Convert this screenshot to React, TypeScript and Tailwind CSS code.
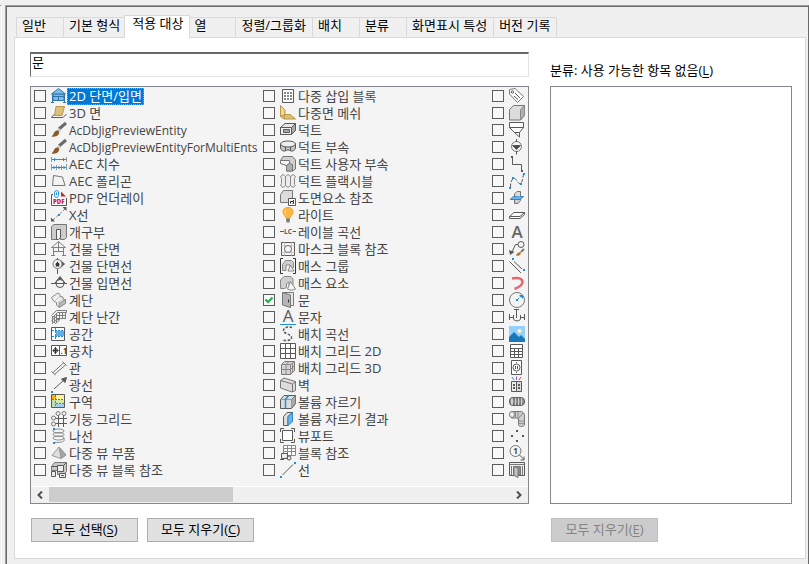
import { useState } from "react";
import type { ReactNode } from "react";
import clsx from "clsx";

const BLUE = "#1e8fdc";
const LIGHT = "#dcdcdc";

const tabs = ["일반", "기본 형식", "적용 대상", "열", "정렬/그룹화", "배치", "분류", "화면표시 특성", "버전 기록"];

type Item = { label: string; icon: ReactNode; hideLabel?: boolean };

const brush = (
  <>
    <path d="M15 1 8 7" stroke="#6b6b6b" strokeWidth="3" />
    <path d="M9 7 7 9" stroke="#c9c9c9" strokeWidth="3" />
    <path d="M.5 14.5C3 13 2.500 9.500 5.500 8.500 8 8 9 10.500 7.500 12.500 6 14.500 3 15 .5 14.500z" fill="#8a5a2b" stroke="none" />
  </>
);

const columns: Item[][] = [
  [
    {
      label: "2D 단면/입면",
      icon: (
        <g stroke="#2f75a8" fill="#7dbdeb">
          <path d="M2 6h11v6.500H2z" />
          <path d="M7.500 .5 14.500 6H.5z" />
          <path d="M7.500 8v4M2 8.500h11M1.500 6.500v8M13.500 6.500v8M0 14.500h3M12 14.500h3" />
        </g>
      ),
    },
    {
      label: "3D 면",
      icon: (
        <>
          <path d="M5 1.500h8.500L11 10.500H3.500z" fill="#dcc077" stroke="#b8964a" />
          <path d="M3 9.500.5 12.500h11.500l3.500-3.500" />
        </>
      ),
    },
    { label: "AcDbJigPreviewEntity", icon: brush },
    { label: "AcDbJigPreviewEntityForMultiEnts", icon: brush },
    {
      label: "AEC 치수",
      icon: (
        <>
          <path d="M.5 1v5M15.500 1v5M.5 8v6M15.500 8v6M5.500 9v5M10.500 9v5" stroke="#999" />
          <path d="M1 3.500h14M1 11.500h14M3.500 2v3M12.500 2v3M3 10v3M8 10v3M13 10v3" stroke={BLUE} />
        </>
      ),
    },
    { label: "AEC 폴리곤", icon: <path d="M2.500 2.500 11.500 4 14 12.500H1.500z" stroke="#777" /> },
    {
      label: "PDF 언더레이",
      icon: (
        <>
          <path d="M2 4.500H.5v11h15V8M12 4.500h-2" />
          <path d="M1.500 8h12.500v6.500H1.500z" fill="#fff" stroke="none" />
          <path d="M7.500 5.500V1.500C7 .3 3.500 .3 3.500 2.500v3c0 2.300 3.500 2.300 4 .7M5.500 2.500v2.500" stroke={BLUE} />
          <path d="M10 1.500 15 6.500H10z" fill="#d5212a" stroke="none" />
          <text x="2" y="13.500" fontSize="6" fontWeight="800" fill="#d5212a" stroke="none">PDF</text>
        </>
      ),
    },
    {
      label: "X선",
      icon: (
        <>
          <path d="M2 13 14 2" strokeDasharray="3 1.500" stroke="#888" />
          <path d="M0 14.500v-4l4 4zM15.500 0v4l-4-4z" fill="#595959" stroke="none" />
          <path d="M7 7h2v2H7z" fill={BLUE} stroke="none" />
        </>
      ),
    },
    {
      label: "개구부",
      icon: (
        <>
          <path d="M.5 2.500 3 .5h12.500v13l-2 2h-4v-10h-4v10h-5z" fill="#cdcdcd" stroke="#777" />
          <path d="M5.500 15.500v-10h4v8L7.500 15.500z" fill="#f4f4f4" />
        </>
      ),
    },
    {
      label: "건물 단면",
      icon: (
        <path d="M7.500 .5 14.500 6.500H.5zM2.500 6.500v8M12.500 6.500v8M7.500 1v9M2.500 10.500h10M0 14.500h4M11 14.500h4" stroke="#808080" />
      ),
    },
    {
      label: "건물 단면선",
      icon: (
        <>
          <path d="M9 2 13.500 6 9 10z" fill="#595959" />
          <circle cx="6.500" cy="6" r="4.500" fill="#f4f4f4" stroke="#777" />
          <path d="M6.500 0v2M6.500 11v5" />
          <path d="m6.500 3.500 2 2.500-.5 2.500H5L4.500 6z" fill="#333" stroke="none" />
        </>
      ),
    },
    {
      label: "건물 입면선",
      icon: (
        <>
          <path d="M9 1.500 14 8H4z" fill="#595959" />
          <circle cx="9" cy="8.500" r="4" fill="#f4f4f4" />
          <path d="M0 8.500h16" />
        </>
      ),
    },
    {
      label: "계단",
      icon: (
        <>
          <path d="M.5 5.500 7 1l2 1.500v2l3 .5v2l2.500 1v3L8 15.500 5.500 13v-2.500L2.500 9z" fill="#f0f0f0" stroke="#888" />
          <path d="m9 4.500-5 4M12 6.500 6.500 11" stroke="#c4c4c4" />
          <path d="m8 11.500 6.500-4v4L8 15.500z" fill="#bdbdbd" stroke="#888" />
        </>
      ),
    },
    {
      label: "계단 난간",
      icon: (
        <path d="M.5 6.500 5.500 1.500h10v2h-9l-5 5M1.500 7v7.500M3.500 6v8M5.500 4v9.500M8.500 3v7.500M11.500 3v7M14.500 3v7M6 6.500h9M6 9.500h9M1 14.500l5-4h3l-5 4.500M.5 11.500l5-4" stroke="#7d7d7d" />
      ),
    },
    {
      label: "공간",
      icon: (
        <>
          <path d="M.5 1.500h13v13H.5z" fill="#fff" />
          <path d="M5 5h8v5H5z" fill="#62aeea" stroke="none" />
          <path d="M4.500 2v12M1 4.500h12M1 10.500h12" stroke={BLUE} strokeDasharray="2 1" />
        </>
      ),
    },
    {
      label: "공차",
      icon: (
        <>
          <path d="M.5 2.500h8v10h-8zM8.500 2.500h7v10h-7z" fill="#fff" />
          <circle cx="4.500" cy="7.500" r="2" stroke="#333" />
          <path d="M1.500 7.500h6M4.500 4v7" stroke="#333" />
          <text x="9.500" y="11" fontSize="8" fontWeight="600" fill="#222" stroke="none">.1</text>
        </>
      ),
    },
    {
      label: "관",
      icon: <path d="M2 12.500 13 2.500M4 14 15 4.500M.5 11.500l4 3.500M11.500 1.500l4 4" stroke="#777" />,
    },
    {
      label: "광선",
      icon: (
        <>
          <path d="M3 12 13 3" />
          <path d="M15.500 .5 14 5.500 10.500 2z" fill="#595959" />
          <path d="M0 14h2v2H0z" fill={BLUE} stroke="none" />
        </>
      ),
    },
    {
      label: "구역",
      icon: (
        <>
          <path d="M1 1h13v13H1z" fill="#fff49b" stroke="none" />
          <path d="M1 6h4v8H1z" fill="#b9dfb8" stroke="none" />
          <path d="M5 10h9v4H5z" fill="#a9cdf2" stroke="none" />
          <path d="M5 6h9v4H5z" fill="#d4e9a8" stroke="none" />
          <path d="M1 1h4v4H1z" fill="#ffb400" stroke="none" />
          <path d="M4.500 1v13M1 5.500h13M5 9.500h9" stroke={BLUE} strokeDasharray="2 1" />
          <path d="M.5 .5h13v13H.5z" />
        </>
      ),
    },
    {
      label: "기둥 그리드",
      icon: (
        <>
          <g stroke="#777">
            <circle cx="7" cy="2.500" r="2" /><circle cx="13" cy="2.500" r="2" />
            <circle cx="2.500" cy="7" r="2" /><circle cx="2.500" cy="13" r="2" />
          </g>
          <path d="M7.500 4.500V16M12.500 4.500V16M4.500 7.500H16M4.500 12.500H16" />
        </>
      ),
    },
    {
      label: "나선",
      icon: (
        <>
          <g stroke="#888">
            <ellipse cx="7.500" cy="3" rx="5.500" ry="2" /><ellipse cx="7.500" cy="6.500" rx="5.500" ry="2" />
            <ellipse cx="7.500" cy="10" rx="5.500" ry="2" /><path d="M13 10v2.500c-1 2-5 2-9 2" />
          </g>
          <path d="M2 0h2v2H2zM2 14h2v2H2z" fill={BLUE} stroke="none" />
        </>
      ),
    },
    {
      label: "다중 뷰 부품",
      icon: (
        <>
          <path d="M8 2 15 10l-5 3.500L1 10.500z" fill="#dedede" stroke="#999" />
          <path d="M8 2 15 10l-5 3.500z" fill="#a5a5a5" stroke="#999" />
        </>
      ),
    },
    {
      label: "다중 뷰 블록 참조",
      icon: (
        <>
          <path d="M.5 4.500 3.500 .5h12v9l-3 3h-6v-4h-6z" fill="#c9c9c9" stroke="#777" />
          <path d="M6.500 3.500h6v6h-6zM12.500 3.500l3-3M.5 4.500h6M.5 9.500h4v5h-4zM8.500 11.500h6v4h-6z" fill="#eee" />
          <path d="M10 13.500h3" />
        </>
      ),
    },
  ],
  [
    {
      label: "다중 삽입 블록",
      icon: (
        <>
          <path d="M2.500 1.500h11v13h-11z" fill="#fff" />
          <path d="M4 5h8M4 8h8M4 11h8" stroke="#8a8a8a" strokeWidth="2" strokeDasharray="2 1" />
        </>
      ),
    },
    {
      label: "다중면 메쉬",
      icon: (
        <>
          <path d="M.5 .5 5 5v5L.5 11.500z" fill="#efd989" stroke="#b8964a" />
          <path d="M.5 11.500 5 9.500h5l5.500 4.500H4z" fill="#dcc077" stroke="#b8964a" />
          <path d="M5 9.500 4 13.500" stroke="#b8964a" />
        </>
      ),
    },
    {
      label: "덕트",
      icon: (
        <>
          <path d="M.5 5.500 5 1.500h10.500v7l-4 4H.5z" fill="#e6e6e6" />
          <path d="M.5 5.500h11v7H.5z" fill="#f2f2f2" />
          <path d="M11.500 5.500l4-4v7l-4 4z" fill="#aaa" />
          <path d="M3.500 7.500h6v3h-6z" fill="#aaa" />
        </>
      ),
    },
    {
      label: "덕트 부속",
      icon: (
        <>
          <path d="M.5 5v4.500c1 2 3 3 5 2.500l1-1h3l1 1c2 .5 4-.5 5-2.500V5z" fill="#c4c4c4" />
          <ellipse cx="8" cy="5" rx="7.500" ry="3" fill="#efefef" />
          <path d="M5.500 8v4M10.500 8v4" />
        </>
      ),
    },
    {
      label: "덕트 사용자 부속",
      icon: (
        <>
          <path d="M.5 4.500 3 .5h9.500l3 3.500v9l-3 2h-6V9.500L.5 7z" fill="#d0d0d0" stroke="#777" />
          <path d="M.5 4.500h9v3l-3 2L.5 7.500z" fill="#f4f4f4" stroke="#777" />
          <path d="M6.500 9.500 9.500 7.500l3 1v6.500h-6z" fill="#b0b0b0" stroke="#777" />
        </>
      ),
    },
    {
      label: "덕트 플랙시블",
      icon: (
        <path d="M.5 3.500 3 1.500l2.500 2L8 1.500l2.500 2 2.500-2 2.500 2-1 2v6l1 1-2.500 2-2.500-2-2.500 2-2.500-2-2.500 2L.5 12.500l1-2v-5zM5.500 3.500v9M10.500 3.500v9" fill="#ececec" stroke="#888" />
      ),
    },
    {
      label: "도면요소 참조",
      icon: (
        <>
          <path d="M.5 4.500 3.500 .5h9v12h-12z" fill="#dcdcdc" stroke="#777" />
          <path d="M8.500 8.500h7v7h-7z" fill="#fff" />
          <path d="M10.500 13.500v-2h3v2h-1M13.500 11V10" stroke="#222" />
        </>
      ),
    },
    {
      label: "라이트",
      icon: (
        <>
          <path d="M8 .5c6 0 6 5 3.500 8L10 11H6L4.500 8.500C2 5.500 2 .5 8 .5z" fill="#ffb845" stroke="#f5a52e" />
          <path d="M6 3c-1 1-1 2-.5 3.500" stroke="#fff2c4" />
          <path d="M6 12.500h4M6.500 14.500h3" strokeWidth="2" stroke="#777" />
        </>
      ),
    },
    {
      label: "레이블 곡선",
      icon: (
        <>
          <path d="M0 7.500h4M12.500 7.500H16" />
          <text x="4" y="10" fontSize="6.500" fontWeight="700" fill="#595959" stroke="none">LC</text>
        </>
      ),
    },
    {
      label: "마스크 블록 참조",
      icon: (
        <>
          <path d="M1.500 1.500h13v13h-13z" />
          <path d="M1.500 4.500h13M1.500 11.500h13M4.500 1.500v13M11.500 1.500v13" stroke="#c5c5c5" />
          <circle cx="8" cy="8" r="3.500" fill="#f4f4f4" stroke="#777" />
        </>
      ),
    },
    {
      label: "매스 그룹",
      icon: (
        <>
          <path d="M3 .5H.5v15H3M13 .5h2.500v15H13" stroke="#333" />
          <path d="M2.500 12.500v-6l3-4h6l2 2v5L10 10V7H6v5.500z" fill="#cfcfcf" stroke="#888" />
          <path d="M10.500 7 14 13H8z" fill="#ececec" stroke="#888" />
        </>
      ),
    },
    {
      label: "매스 요소",
      icon: (
        <>
          <path d="M.5 13.500V5L4 1.500h7l2 2.500v6H9V7L6.500 8.500v4l-2 1z" fill="#cfcfcf" stroke="#888" />
          <path d="M10.500 6.500 15.500 14c-2 1.500-6 1.500-8 0z" fill="#f2f2f2" stroke="#888" />
        </>
      ),
    },
    {
      label: "문",
      icon: (
        <>
          <path d="M2.500 .5h11v13h-5" fill="#e8e8e8" stroke="#777" />
          <path d="M2.500 .5 10.500 3v12.500l-8-2.500z" fill="#b5b5b5" stroke="#777" />
          <path d="M8.500 7.500v3" stroke="#333" />
        </>
      ),
    },
    {
      label: "문자",
      icon: (
        <>
          <text x="8" y="13" fontSize="17" textAnchor="middle" fill="#595959" stroke="none">A</text>
          <path d="M0 15.500h16" stroke={BLUE} />
        </>
      ),
    },
    {
      label: "배치 곡선",
      icon: (
        <path d="M12 1.500C8 0 3 2 3.500 5s8.500 3 8 7c0 2.500-6 3-9 2" strokeWidth="1.500" strokeDasharray="2.500 1.500" />
      ),
    },
    { label: "배치 그리드 2D", icon: <path d="M.5 .5h15v15H.5zM5.500 .5v15M10.500 .5v15M.5 5.500h15M.5 10.500h15" fill="#fff" /> },
    {
      label: "배치 그리드 3D",
      icon: (
        <>
          <path d="M1.500 4.500 4.500 1.500h10v9l-4 4h-9z" fill="#d4d4d4" stroke="#777" />
          <path d="M1.500 4.500h9v10M10.500 4.500l4-3M6 4.500v10M1.500 9.500h9l4-4M12.500 3v10M6 4.500 9 1.500" stroke="#888" />
        </>
      ),
    },
    {
      label: "벽",
      icon: (
        <>
          <path d="M.5 3.500 4 1 15.500 4.500v9L12 15 .5 11z" fill="#dcdcdc" stroke="#777" />
          <path d="M.5 3.500 12.500 7l3-2.500M12.500 7v8" stroke="#777" />
        </>
      ),
    },
    {
      label: "볼륨 자르기",
      icon: (
        <>
          <path d="M.5 5.500 4 1.500h11.500v8l-4 5H.5z" fill={LIGHT} />
          <path d="M11.500 5.500l4-4v8l-4 5z" fill="#aaa" stroke="#777" />
          <path d="M.5 5.500h11v9" stroke="#999" />
          <path d="M5.500 14.500v-9l3-4" stroke={BLUE} strokeWidth="1.500" />
        </>
      ),
    },
    {
      label: "볼륨 자르기 결과",
      icon: (
        <>
          <path d="M3.500 5.500 7 1.500h5.500L8 5.500v9H3.500z" fill="#dedede" />
          <path d="M8 5.500l4.500-4v9L8 14.500z" fill="#6db4ea" stroke="#2f86c5" />
        </>
      ),
    },
    {
      label: "뷰포트",
      icon: (
        <>
          <path d="M2.500 2.500h10v10h-10z" fill="#fff" />
          <path d="M4 .5H.5V4M11 .5h3.500V4M.5 11v3.500H4M14.500 11v3.500H11" />
        </>
      ),
    },
    {
      label: "블록 참조",
      icon: (
        <>
          <path d="M3.500 .5h12v10h-12zM3.500 3.500h12M3.500 6.500h12M7.500 .5v10M11.500 .5v10" fill="#fff" stroke="#888" />
          <path d="M1.500 8.500h6v5h-6z" fill="#eee" />
          <circle cx="9" cy="13" r="2" />
          <path d="M0 14.500h4" />
        </>
      ),
    },
    {
      label: "선",
      icon: (
        <>
          <path d="M2.500 13 13 2.500" />
          <path d="M0 14h2v2H0zM14 0h2v2h-2z" fill={BLUE} stroke="none" />
        </>
      ),
    },
  ],
  [
    {
      label: "태그",
      hideLabel: true,
      icon: (
        <>
          <path d="M.5 1.500 6 .5l8.500 8-6 6L.5 6z" fill="#fff" stroke="#777" />
          <circle cx="3.500" cy="4" r="1.200" />
          <path d="M6 5l5 5M5 8l4 3.500" />
        </>
      ),
    },
    {
      label: "솔리드",
      hideLabel: true,
      icon: (
        <>
          <path d="M.5 4.500 4.500 .5h11v10l-4 4.500H.5z" fill="#dcdcdc" stroke="#777" />
          <path d="M11.500 4.500l4-4v10l-4 4.500z" fill="#b0b0b0" stroke="#888" />
        </>
      ),
    },
    { label: "스케줄 태그", hideLabel: true, icon: <path d="M.5 .5h14v5H.5zM.5 5.500 5.500 10.500h5L14.500 5.500M5.500 10.500l5 4.500v-4.500" fill="#fff" /> },
    {
      label: "입면 표식",
      hideLabel: true,
      icon: (
        <>
          <circle cx="7.500" cy="7.500" r="5" stroke="#777" />
          <path d="M3.500 6.500h8l-4 4z" fill="#4a4a4a" />
          <path d="M7.500 0v3M7.500 12v3.500" />
        </>
      ),
    },
    {
      label: "배관",
      hideLabel: true,
      icon: (
        <>
          <path d="M3.500 2v6.500h9V14" />
          <path d="M2 0h2v2H2zM12 14h2v2h-2z" fill="#595959" stroke="none" />
        </>
      ),
    },
    {
      label: "스플라인",
      hideLabel: true,
      icon: (
        <>
          <path d="M1.500 14c0-5 1.500-9 4-8.500s4 6.500 6 5S14 4 14.500 1" strokeDasharray="3.500 1.500" />
          <path d="M0 14h2v2H0zM3 4h2v2H3zM11 10h2v2h-2zM14 0h2v2h-2z" fill={BLUE} stroke="none" />
        </>
      ),
    },
    {
      label: "단면 평면",
      hideLabel: true,
      icon: (
        <>
          <path d="M5.500 4 8 1.500h3.500v9L9 13.500H5.500z" fill="#cfcfcf" stroke="#777" />
          <path d="M1 9.500 4.500 6.500h10L11 9.500z" fill="#6db4ea" stroke="#2f86c5" />
          <path d="M6 6V4.500L8.500 2H11v4.500z" fill="#dcdcdc" stroke="none" />
        </>
      ),
    },
    {
      label: "슬라브",
      hideLabel: true,
      icon: <path d="M.5 9.500 5 5.500h10.500v2l-4.500 4H.5zM.5 9.500H11l4.500-4" fill="#fff" />,
    },
    {
      label: "여러 줄 문자",
      hideLabel: true,
      icon: <text x="8" y="14" fontSize="17" fontWeight="600" textAnchor="middle" fill="#666" stroke="none">A</text>,
    },
    {
      label: "스타일 표식",
      hideLabel: true,
      icon: (
        <>
          <circle cx="12" cy="3.500" r="3" />
          <path d="M9 3.500H6.500L3 11" />
          <path d="M0 9l5.500 2L1 14z" fill="#595959" stroke="none" />
          <path d="M15 8l-3 3" stroke="#777" strokeWidth="2" />
          <path d="M7 14.500c1-3 3-4 5-3 0 2-2 4-5 3z" fill="#b5762a" stroke="none" />
        </>
      ),
    },
    {
      label: "여러 줄",
      hideLabel: true,
      icon: (
        <>
          <path d="M.5 3.500 12 15M5 3.500 13 11" />
          <path d="M3 0h2v2H3zM14 11h2v2h-2z" fill={BLUE} stroke="none" />
        </>
      ),
    },
    {
      label: "스윕",
      hideLabel: true,
      icon: <path d="M3 3.500c6-1.500 10.500 0 10.500 3.500 0 3-3 5-8 7" stroke="#e8656a" strokeWidth="2.500" />,
    },
    {
      label: "원",
      hideLabel: true,
      icon: (
        <>
          <circle cx="8" cy="8" r="7.500" stroke="#777" />
          <path d="M9 7l4-4" stroke={BLUE} strokeDasharray="1.500 1" />
          <path d="M7 7h2v2H7zM10 3h4v4z" fill={BLUE} stroke="none" />
        </>
      ),
    },
    {
      label: "위생 기구",
      hideLabel: true,
      icon: <path d="M.5 5v6M15.500 5v6M.5 8.500h4M11.500 8.500h4M4.500 6v4c1 2.500 6 2.500 7 0V6M7.500 1v8M5 .5h5" />,
    },
    {
      label: "이미지",
      hideLabel: true,
      icon: (
        <>
          <path d="M0 0h16v16H0z" fill="#94d0fa" stroke="none" />
          <circle cx="10.500" cy="5" r="2" fill="#fff7c7" stroke="none" />
          <path d="M0 11 5 6l5 5 2-2 4 4v3H0z" fill="#1878b9" stroke="none" />
        </>
      ),
    },
    { label: "일람표", hideLabel: true, icon: <path d="M1.500 1.500h12v13h-12zM1.500 5.500h12M1.500 8.500h12M1.500 11.500h12M5.500 5.500v9M9.500 5.500v9" fill="#fff" /> },
    {
      label: "장치",
      hideLabel: true,
      icon: (
        <>
          <path d="M2.500 .5h10v14h-10z" fill="#fff" />
          <circle cx="7.500" cy="7.500" r="3.500" />
          <path d="M6.500 6v3M8.500 6v3M7.500 2v1M7.500 12v1" />
        </>
      ),
    },
    {
      label: "패널",
      hideLabel: true,
      icon: (
        <>
          <path d="M3 0l2 3" stroke={BLUE} />
          <path d="M7.500 -.5v3.500" stroke="#9c4fd0" />
          <path d="M12 0l-2 3" stroke="#e34444" />
          <path d="M2.500 4.500h5v10h-5z" fill="#eee" />
          <path d="M7.500 4.500h5v10h-5z" fill="#dcdcdc" />
          <path d="M4 8h2M4 11h2M9 8h2M9 11h2" strokeWidth="2" />
        </>
      ),
    },
    {
      label: "전선관",
      hideLabel: true,
      icon: (
        <>
          <rect x=".5" y="3.500" width="15" height="8" rx="3.500" fill="#aaa" />
          <g stroke="#666" fill="#d0d0d0">
            <ellipse cx="12.500" cy="7.500" rx="1.500" ry="4" /><ellipse cx="9.500" cy="7.500" rx="1.500" ry="4" />
            <ellipse cx="6.500" cy="7.500" rx="1.500" ry="4" /><ellipse cx="3" cy="7.500" rx="2" ry="4" />
          </g>
        </>
      ),
    },
    {
      label: "전선관 부속",
      hideLabel: true,
      icon: (
        <>
          <path d="M2.500 .5H11c3 0 4.500 2 4.500 4.500v9c-1.500 2-5 2-6 0V8l-2-1h-5z" fill="#d0d0d0" stroke="#777" />
          <ellipse cx="3" cy="3.500" rx="2.500" ry="3" fill="#eee" stroke="#777" />
          <path d="M6.500 .5v6M9 1v6.500M14 2 9.500 7.500M9.500 9.500c2 1 4 1 6 0M9.500 12c2 1 4 1 6 0" stroke="#888" />
        </>
      ),
    },
    {
      label: "점",
      hideLabel: true,
      icon: <path d="M7 2h2v2H7zM2 7h2v2H2zM13 7h2v2h-2zM7 12h2v2H7z" fill="#595959" stroke="none" />,
    },
    {
      label: "상세정보 표식",
      hideLabel: true,
      icon: (
        <>
          <circle cx="6.500" cy="6" r="5.500" stroke="#777" />
          <path d="M10.500 10l4.500 4.500M15 11.500v3.500h-3.500" />
          <text x="6.500" y="9" fontSize="8" fontWeight="700" textAnchor="middle" fill="#444" stroke="none">1</text>
        </>
      ),
    },
    {
      label: "문/윈도우 조합",
      hideLabel: true,
      icon: (
        <>
          <path d="M.5 .5h15v13H.5z" fill="#efefef" />
          <path d="M.5 2.500h15M2.500 4v9M13.500 4v9" stroke="#777" />
          <path d="M4.500 4.500h7V13h-7z" fill="#8a8a8a" stroke="#777" />
          <path d="M5 4.500 9 6v9.500l-4-2z" fill="#c4c4c4" stroke="#777" />
        </>
      ),
    },
  ],
];

function ItemIcon({ children }: { children: ReactNode }) {
  return (
    <svg
      className="ml-[5px] size-4 shrink-0 overflow-visible"
      viewBox="0 0 16 16"
      fill="none"
      stroke="#595959"
      aria-hidden="true"
    >
      {children}
    </svg>
  );
}

type ItemRowProps = { item: Item; checked: boolean; selected: boolean; onToggle: () => void };

function ItemRow({ item, checked, selected, onToggle }: ItemRowProps) {
  // Class names of drawing entities have no Korean text and are set smaller
  const latinOnly = /^[A-Za-z]+$/.test(item.label);

  return (
    <li>
      <label className="flex h-[17px] items-start text-[#444444]">
        <span className="relative mt-0.5 size-3 shrink-0">
          <input
            type="checkbox"
            checked={checked}
            onChange={onToggle}
            aria-label={item.hideLabel ? item.label : undefined}
            className="block size-3 appearance-none border border-[#5c5c5c] bg-[#f8f8f8]"
          />
          {checked && (
            <svg className="pointer-events-none absolute inset-0" viewBox="0 0 12 12" fill="none" aria-hidden="true">
              <path d="M2.500 5.500 5 8l4.500-4.500" stroke="#1faa4b" strokeWidth="2" />
            </svg>
          )}
        </span>
        <ItemIcon>{item.icon}</ItemIcon>
        {!item.hideLabel && (
          <span
            className={clsx(
              "h-[17px] px-0.5 whitespace-nowrap",
              latinOnly && "text-xs/[17px]",
              selected && "bg-[#0078d7] text-white outline-1 -outline-offset-1 outline-dotted outline-[#ff8728]",
            )}
          >
            {item.label}
          </span>
        )}
      </label>
    </li>
  );
}

type ActionButtonProps = { label: string; hotkey: string; disabled?: boolean; onClick?: () => void };

function ActionButton({ label, hotkey, disabled, onClick }: ActionButtonProps) {
  return (
    <button
      type="button"
      disabled={disabled}
      onClick={onClick}
      className="h-6 w-[107px] border border-[#adadad] bg-[#e1e1e1] pb-0.5 disabled:border-[#bfbfbf] disabled:bg-[#cccccc] disabled:text-[#838383]"
    >
      {label}(<span className="underline underline-offset-2">{hotkey}</span>)
    </button>
  );
}

function ScrollArrow({ direction }: { direction: "left" | "right" }) {
  return (
    <button
      type="button"
      aria-label={direction === "left" ? "왼쪽" : "오른쪽"}
      className="flex w-[18px] shrink-0 items-center justify-center"
    >
      <svg className="size-2" viewBox="0 0 8 8" fill="none" stroke="#505050" strokeWidth="2" aria-hidden="true">
        <path d={direction === "left" ? "M6 .5 2.500 4 6 7.500" : "M2 .5 5.500 4 2 7.500"} />
      </svg>
    </button>
  );
}

export default function App() {
  const [activeTab, setActiveTab] = useState("적용 대상");
  const [filter, setFilter] = useState("문");
  const [checked, setChecked] = useState<string[]>(["문"]);

  const toggle = (label: string) =>
    setChecked((prev) => (prev.includes(label) ? prev.filter((l) => l !== label) : [...prev, label]));

  return (
    <div className="flex min-h-screen bg-[#f0f0f0] pt-[5px] font-['Open_Sans','Noto_Sans_CJK_KR',sans-serif] text-[13px] leading-[17px] text-black">
      <div className="mr-[3px] w-0.5 border-t border-r border-t-[#a0a0a0] border-r-white" />
      <main className="min-w-0 flex-1 border-t border-r border-l border-t-[#a0a0a0] border-r-[#696969] border-l-[#a0a0a0]">
        <div className="h-full border-t border-l border-[#696969] pt-2 pr-0.5 pl-[7px]">
          <div role="tablist" className="flex items-end pt-0.5 pl-0.5">
            {tabs.map((tab) => (
              <button
                key={tab}
                type="button"
                role="tab"
                aria-selected={tab === activeTab}
                onClick={() => setActiveTab(tab)}
                className={clsx(
                  "shrink-0 border-t border-l border-[#d9d9d9] text-left leading-3 whitespace-nowrap last:border-r",
                  tab === activeTab
                    ? "relative z-10 -mx-0.5 -mt-0.5 -mb-px h-[23px] border-r bg-white pr-1.5 pb-2 pl-[7px]"
                    : "h-5 min-w-[47px] pr-1.5 pb-1.5 pl-[5px]",
                )}
              >
                {tab}
              </button>
            ))}
          </div>

          <section role="tabpanel" className="flex gap-[21px] border border-[#d9d9d9] bg-white pt-3.5 pr-[13px] pb-4 pl-[15px]">
            <div className="flex min-w-0 flex-1 flex-col">
              <input
                type="text"
                aria-label="필터"
                value={filter}
                onChange={(e) => setFilter(e.target.value)}
                className="h-[25px] w-full border border-t-2 border-t-[#696969] border-r-[#e3e3e3] border-b-[#e3e3e3] border-l-[#696969] pb-2 pl-px leading-[14px] outline-none"
              />
              <div className="mt-[9px] h-[418px] border border-[#828790] bg-[#f4f4f4] pt-px">
                <div className="flex h-[398px] overflow-hidden pl-[3px]">
                  {columns.map((items, i) => (
                    <ul key={i} className="w-[229px] shrink-0">
                      {items.map((item) => (
                        <ItemRow
                          key={item.label}
                          item={item}
                          checked={checked.includes(item.label)}
                          selected={item.label === "2D 단면/입면"}
                          onToggle={() => toggle(item.label)}
                        />
                      ))}
                    </ul>
                  ))}
                </div>
                <div className="flex h-[17px] border-t border-white bg-[#f0f0f0]">
                  <ScrollArrow direction="left" />
                  <div className="flex-1">
                    <div className="h-[15px] w-2/5 bg-[#cdcdcd]" />
                  </div>
                  <ScrollArrow direction="right" />
                </div>
              </div>
              <div className="mt-3.5 flex gap-[9px] pl-px">
                <ActionButton
                  label="모두 선택"
                  hotkey="S"
                  onClick={() => setChecked(columns.flat().map((item) => item.label))}
                />
                <ActionButton label="모두 지우기" hotkey="C" onClick={() => setChecked([])} />
              </div>
            </div>

            <div className="flex w-[242px] shrink-0 flex-col">
              <h2 className="pt-[9px] leading-[18px]">
                분류: 사용 가능한 항목 없음(<span className="underline underline-offset-2">L</span>)
              </h2>
              <div className="mt-[7px] h-[418px] border border-[#828790] bg-white" />
              <div className="mt-3.5 pl-px">
                <ActionButton label="모두 지우기" hotkey="E" disabled />
              </div>
            </div>
          </section>
        </div>
      </main>
    </div>
  );
}
